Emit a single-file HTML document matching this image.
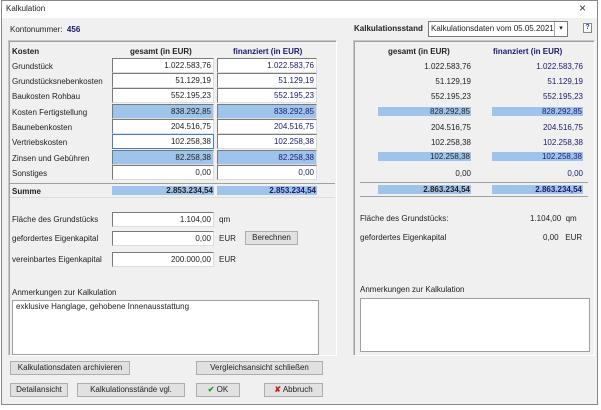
<!DOCTYPE html>
<html><head><meta charset="utf-8"><style>
*{box-sizing:border-box;margin:0;padding:0}
body{width:601px;height:410px;background:#fff;font-family:"Liberation Sans",sans-serif;font-size:8px;color:#222;position:relative;overflow:hidden}
.a{position:absolute;white-space:nowrap}
.win{position:absolute;left:1px;top:0;width:597px;height:405px;border:1px solid #888;background:#f0f0f0}
.tb{position:absolute;left:0;top:0;width:595px;height:17px;background:#fff}
.panel{position:absolute;border:1px solid #c8c8c8;border-right-color:#fff;border-bottom-color:#fff;box-shadow:1px 1px 0 #a0a0a0 inset}
.inp{position:absolute;background:#fff;border:1px solid #7a7a7a;border-right-color:#ddd;border-bottom-color:#ddd;text-align:right;padding-right:2px;line-height:13px;height:15px}
.blue{background:#9fc4ec}
.nv{color:#1a1a6e}
.b{font-weight:bold}
.btn{position:absolute;background:#e1e1e1;border:1px solid #adadad;text-align:center;line-height:12px;height:14px}
.bar{position:absolute;background:#9fc4ec;height:9px;text-align:right;padding-right:1px;line-height:9px}
.ln{position:absolute;height:1px;background:#a0a0a0}
</style></head><body>
<div class="win">
<div class="tb"></div>
</div>
<div class="a" style="left:6px;top:4px;font-size:8px">Kalkulation</div>
<div class="a" style="left:579px;top:1px;font-size:12px;color:#333">×</div>
<div class="a" style="left:10px;top:25px">Kontonummer:&nbsp; <span class="b nv">456</span></div>
<div class="panel" style="left:8px;top:40px;width:329px;height:316px"></div>
<div class="panel" style="left:353px;top:40px;width:242px;height:316px"></div>
<div class="a b" style="left:12px;top:47px">Kosten</div>
<div class="a b" style="left:130px;top:47px">gesamt (in EUR)</div>
<div class="a b nv" style="left:233px;top:47px">finanziert (in EUR)</div>

<div class="a" style="left:12px;top:62px">Grundstück</div>
<div class="a" style="left:12px;top:77px">Grundstücksnebenkosten</div>
<div class="a" style="left:12px;top:92px">Baukosten Rohbau</div>
<div class="a" style="left:12px;top:108px">Kosten Fertigstellung</div>
<div class="a" style="left:12px;top:123px">Baunebenkosten</div>
<div class="a" style="left:12px;top:138px">Vertriebskosten</div>
<div class="a" style="left:12px;top:154px">Zinsen und Gebühren</div>
<div class="a" style="left:12px;top:169px">Sonstiges</div>

<div class="inp" style="left:112px;top:58px;width:102px">1.022.583,76</div>
<div class="inp nv" style="left:217px;top:58px;width:100px">1.022.583,76</div>
<div class="inp" style="left:112px;top:73px;width:102px">51.129,19</div>
<div class="inp nv" style="left:217px;top:73px;width:100px">51.129,19</div>
<div class="inp" style="left:112px;top:88px;width:102px">552.195,23</div>
<div class="inp nv" style="left:217px;top:88px;width:100px">552.195,23</div>
<div class="inp blue" style="left:112px;top:104px;width:102px">838.292,85</div>
<div class="inp blue nv" style="left:217px;top:104px;width:100px">838.292,85</div>
<div class="inp" style="left:112px;top:119px;width:102px">204.516,75</div>
<div class="inp nv" style="left:217px;top:119px;width:100px">204.516,75</div>
<div class="inp" style="left:112px;top:134px;width:102px;border-color:#3c7fd4">102.258,38</div>
<div class="inp nv" style="left:217px;top:134px;width:100px">102.258,38</div>
<div class="inp blue" style="left:112px;top:150px;width:102px">82.258,38</div>
<div class="inp blue nv" style="left:217px;top:150px;width:100px">82.258,38</div>
<div class="inp" style="left:112px;top:165px;width:102px">0,00</div>
<div class="inp nv" style="left:217px;top:165px;width:100px">0,00</div>
<div class="ln" style="left:10px;top:183px;width:325px"></div>
<div class="a b" style="left:12px;top:187px">Summe</div>
<div class="bar b" style="left:112px;top:186px;width:102px">2.853.234,54</div>
<div class="bar b nv" style="left:217px;top:186px;width:100px">2.853.234,54</div>
<div class="ln" style="left:10px;top:197px;width:325px;background:#ddd"></div>

<div class="a" style="left:12px;top:215px">Fläche des Grundstücks</div>
<div class="a" style="left:12px;top:234px">gefordertes Eigenkapital</div>
<div class="a" style="left:12px;top:255px">vereinbartes Eigenkapital</div>
<div class="inp" style="left:112px;top:212px;width:102px">1.104,00</div>
<div class="inp" style="left:112px;top:231px;width:102px">0,00</div>
<div class="inp" style="left:112px;top:252px;width:102px">200.000,00</div>
<div class="a" style="left:219px;top:215px">qm</div>
<div class="a" style="left:219px;top:234px">EUR</div>
<div class="a" style="left:219px;top:255px">EUR</div>
<div class="btn" style="left:245px;top:231px;width:53px">Berechnen</div>
<div class="a" style="left:12px;top:288px">Anmerkungen zur Kalkulation</div>
<div class="inp" style="left:12px;top:300px;width:307px;height:55px;text-align:left;padding-left:3px;line-height:12px;border-color:#a0a0a0">exklusive Hanglage, gehobene Innenausstattung</div>

<div class="a b" style="left:354px;top:24px">Kalkulationsstand</div>
<div class="inp" style="left:428px;top:21px;width:140px;height:16px;text-align:left;padding-left:2px;border-color:#7a7a7a">Kalkulationsdaten vom 05.05.2021</div>
<div class="a" style="left:554px;top:22px;width:13px;height:14px;border-left:1px solid #aaa;font-size:7px;text-align:center;line-height:14px">▾</div>
<div class="a b" style="left:583px;top:23px;width:9px;height:10px;border:1px solid #888;color:#1a3ab0;font-size:7px;text-align:center;line-height:8px;background:#fff">?</div>

<div class="a b" style="left:388px;top:47px">gesamt (in EUR)</div>
<div class="a b nv" style="left:493px;top:47px">finanziert (in EUR)</div>
<div class="a" style="right:130px;top:62px">1.022.583,76</div><div class="a nv" style="right:18px;top:62px">1.022.583,76</div>
<div class="a" style="right:130px;top:77px">51.129,19</div><div class="a nv" style="right:18px;top:77px">51.129,19</div>
<div class="a" style="right:130px;top:92px">552.195,23</div><div class="a nv" style="right:18px;top:92px">552.195,23</div>
<div class="bar" style="left:378px;top:107px;width:93px">828.292,85</div><div class="bar nv" style="left:492px;top:107px;width:91px">828.292,85</div>
<div class="a" style="right:130px;top:123px">204.516,75</div><div class="a nv" style="right:18px;top:123px">204.516,75</div>
<div class="a" style="right:130px;top:138px">102.258,38</div><div class="a nv" style="right:18px;top:138px">102.258,38</div>
<div class="bar" style="left:378px;top:152px;width:93px">102.258,38</div><div class="bar nv" style="left:492px;top:152px;width:91px">102.258,38</div>
<div class="a" style="right:130px;top:169px">0,00</div><div class="a nv" style="right:18px;top:169px">0,00</div>
<div class="ln" style="left:360px;top:182px;width:228px"></div>
<div class="bar b" style="left:378px;top:185px;width:93px">2.863.234,54</div><div class="bar b nv" style="left:492px;top:185px;width:91px">2.863.234,54</div>
<div class="ln" style="left:360px;top:196px;width:228px"></div>
<div class="a" style="left:360px;top:214px">Fläche des Grundstücks:</div>
<div class="a" style="left:530px;top:214px">1.104,00&nbsp; qm</div>
<div class="a" style="left:360px;top:233px">gefordertes Eigenkapital</div>
<div class="a" style="left:543px;top:233px">0,00&nbsp;&nbsp; EUR</div>
<div class="a" style="left:360px;top:285px">Anmerkungen zur Kalkulation</div>
<div class="inp" style="left:360px;top:298px;width:230px;height:54px;border-color:#a0a0a0"></div>

<div class="btn" style="left:10px;top:361px;width:120px">Kalkulationsdaten archivieren</div>
<div class="btn" style="left:196px;top:361px;width:127px">Vergleichsansicht schließen</div>
<div class="btn" style="left:10px;top:383px;width:58px">Detailansicht</div>
<div class="btn" style="left:77px;top:383px;width:108px">Kalkulationsstände vgl.</div>
<div class="btn" style="left:196px;top:383px;width:44px"><span style="color:#2a9a2a;font-weight:bold">✔</span> OK</div>
<div class="btn" style="left:264px;top:383px;width:59px"><span style="color:#d02020;font-weight:bold">✘</span> Abbruch</div>
</body></html>
